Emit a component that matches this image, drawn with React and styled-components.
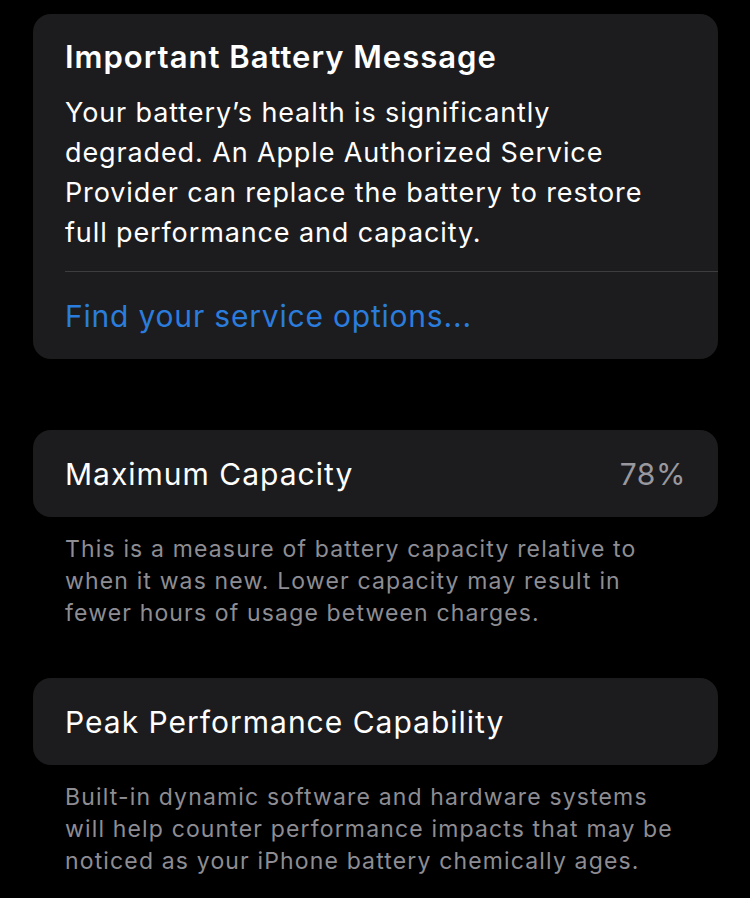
import React from "react";
import styled, { createGlobalStyle } from "styled-components";

const GlobalStyle = createGlobalStyle`
	html, body {
		margin: 0;
		padding: 0;
		background: #000;
	}
	body {
		font-family: Inter, "Noto Sans", sans-serif;
		-webkit-font-smoothing: antialiased;
	}
`;

const Page = styled.div`
	width: 750px;
	min-height: 898px;
	background: #000;
	padding: 14px 32px 0 33px;
	box-sizing: border-box;
	display: flex;
	flex-direction: column;
`;

const Card = styled.section`
	background: #1c1c1e;
	border-radius: 18px;
	overflow: hidden;
	margin-top: ${(p) => p.$top || 0}px;
`;

const MessageBody = styled.div`
	padding: 23px 32px 18px 32px;
`;

const Title = styled.h2`
	margin: 0 0 16px 0;
	font-size: 31px;
	line-height: 40px;
	font-weight: 600;
	color: #fff;
	letter-spacing: 1px;
`;

const Text = styled.p`
	margin: 0;
	font-size: 27px;
	line-height: 40px;
	color: #fff;
	letter-spacing: 0.88px;
`;

const Divider = styled.div`
	height: 1px;
	background: #3d3d40;
	margin-left: 32px;
`;

const LinkRow = styled.div`
	height: 87px;
	padding: 0 32px;
	display: flex;
	align-items: center;
`;

const Link = styled.a`
	font-size: 30px;
	color: #2b7ddd;
	letter-spacing: 0.8px;
	cursor: pointer;
`;

const Row = styled.div`
	height: 87px;
	padding: 0 32px;
	display: flex;
	align-items: center;
	justify-content: space-between;
`;

const Label = styled.span`
	font-size: 30px;
	color: #fff;
	letter-spacing: 1px;
`;

const Value = styled.span`
	font-size: 30px;
	color: #98989e;
	letter-spacing: 0.6px;
`;

const Footer = styled.p`
	margin: 16px 0 0 0;
	padding: 0 32px;
	font-size: 23px;
	line-height: 32px;
	color: #8d8d93;
	letter-spacing: 1.15px;
`;

const App = () => {
	return (
		<>
			<GlobalStyle />
			<Page>
				<Card>
					<MessageBody>
						<Title>Important Battery Message</Title>
						<Text>
							Your battery’s health is significantly degraded. An Apple
							Authorized Service Provider can replace the battery to restore
							full performance and capacity.
						</Text>
					</MessageBody>
					<Divider />
					<LinkRow>
						<Link>Find your service options...</Link>
					</LinkRow>
				</Card>

				<Card $top={71}>
					<Row>
						<Label>Maximum Capacity</Label>
						<Value>78%</Value>
					</Row>
				</Card>
				<Footer>
					This is a measure of battery capacity relative to when it was new.
					Lower capacity may result in fewer hours of usage between charges.
				</Footer>

				<Card $top={49}>
					<Row>
						<Label>Peak Performance Capability</Label>
					</Row>
				</Card>
				<Footer>
					Built-in dynamic software and hardware systems will help counter
					performance impacts that may be noticed as your iPhone battery
					chemically ages.
				</Footer>
			</Page>
		</>
	);
};

export default App;
